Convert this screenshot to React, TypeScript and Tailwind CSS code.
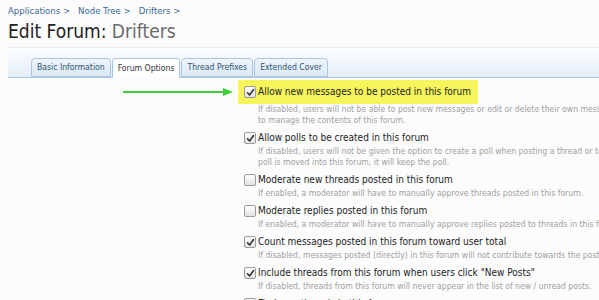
import { ReactNode } from 'react';

const font = { fontFamily: '"DejaVu Sans Condensed", "DejaVu Sans", Tahoma, sans-serif' };

type Option = {
    label: string;
    hint: string[];
    checked: boolean;
    highlight?: boolean;
};

const options: Option[] = [
    {
        label: 'Allow new messages to be posted in this forum',
        hint: [
            'If disabled, users will not be able to post new messages or edit or delete their own messages. Moderators will still be able',
            'to manage the contents of this forum.',
        ],
        checked: true,
        highlight: true,
    },
    {
        label: 'Allow polls to be created in this forum',
        hint: [
            'If disabled, users will not be given the option to create a poll when posting a thread or to add one later. If a thread with a',
            'poll is moved into this forum, it will keep the poll.',
        ],
        checked: true,
    },
    {
        label: 'Moderate new threads posted in this forum',
        hint: ['If enabled, a moderator will have to manually approve threads posted in this forum.'],
        checked: false,
    },
    {
        label: 'Moderate replies posted in this forum',
        hint: ['If enabled, a moderator will have to manually approve replies posted to threads in this forum.'],
        checked: false,
    },
    {
        label: 'Count messages posted in this forum toward user total',
        hint: ['If disabled, messages posted (directly) in this forum will not contribute towards the posting count of the user.'],
        checked: true,
    },
    {
        label: 'Include threads from this forum when users click "New Posts"',
        hint: ['If disabled, threads from this forum will never appear in the list of new / unread posts.'],
        checked: true,
    },
    {
        label: 'Find new threads in this forum',
        hint: ['If enabled, threads in this forum will be listed.'],
        checked: false,
    },
];

function Checkbox({ checked }: { checked: boolean }) {
    return (
        <span className="w-[12px] h-[12px] shrink-0 rounded-[2px] border border-[#9a9a9a] bg-gradient-to-b from-white to-[#e2e2e2] flex items-center justify-center">
            {checked && (
                <svg width="9" height="9" viewBox="0 0 9 9">
                    <path d="M1.5 4.8 L3.6 7 L7.6 1.6" fill="none" stroke="#333" strokeWidth="1.6" strokeLinecap="round" strokeLinejoin="round" />
                </svg>
            )}
        </span>
    );
}

function Tab({ children, active }: { children: ReactNode; active?: boolean }) {
    return (
        <div
            className={
                active
                    ? 'h-[20px] px-[5px] flex items-center text-[8.6px] text-[#333] bg-white border border-b-0 border-[#a9c6e2] rounded-t-[4px] -mb-px relative z-10'
                    : 'h-[19px] px-[5px] flex items-center text-[8.6px] text-[#2f5373] bg-gradient-to-b from-[#eef5fb] to-[#dce9f5] border border-[#a9c6e2] rounded-t-[4px]'
            }
        >
            {children}
        </div>
    );
}

export default function App() {
    return (
        <div className="w-[599px] h-[300px] overflow-hidden bg-[#fcfcfd]" style={font}>
            {/* Breadcrumb */}
            <div className="pl-[8px] pt-[5px] h-[17px] flex items-center gap-[8px] text-[9.5px] text-[#3b6a93]">
                <span>Applications &gt;</span>
                <span>Node Tree &gt;</span>
                <span>Drifters &gt;</span>
            </div>

            {/* Title */}
            <h1 className="pl-[8px] h-[28px] flex items-center text-[19px] leading-none text-[#222]">
                Edit Forum:&nbsp;<span className="text-[#6b6b6b]">Drifters</span>
            </h1>

            {/* Tabs header */}
            <div className="ml-[8px] mt-[2px] h-[31px] border-t border-[#e3edf6] bg-gradient-to-b from-[#fcfdfe] to-[#e4eef8] border-b border-b-[#a9c6e2] flex items-end pl-[23px] gap-px">
                <Tab>Basic Information</Tab>
                <Tab active>Forum Options</Tab>
                <Tab>Thread Prefixes</Tab>
                <Tab>Extended Cover</Tab>
            </div>

            {/* Options */}
            <div className="relative pl-[238px] pt-[2px]">
                {/* annotation arrow */}
                <svg className="absolute left-[121px] top-[9px]" width="114" height="10" viewBox="0 0 114 10">
                    <line x1="2" y1="5" x2="104" y2="5" stroke="#3dcf3d" strokeWidth="2" />
                    <path d="M102 1 L112 5 L102 9 Z" fill="#3dcf3d" />
                </svg>

                <div className="flex flex-col gap-[5px]">
                    {options.map((o) => (
                        <div key={o.label} className="flex flex-col">
                            <div
                                className={
                                    o.highlight
                                        ? 'self-start h-[24px] pl-[6px] pr-[7px] flex items-center gap-[2px] bg-[#f6f55c]'
                                        : 'h-[14px] pl-[6px] flex items-center gap-[2px]'
                                }
                            >
                                <Checkbox checked={o.checked} />
                                <span className="text-[10px] leading-[14px] text-[#222] whitespace-nowrap">{o.label}</span>
                            </div>
                            <div className={o.highlight ? 'pl-[20px] mt-0' : 'pl-[20px] mt-[1px]'}>
                                {o.hint.map((h) => (
                                    <div key={h} className="text-[8.6px] leading-[11px] text-[#a0a0a0] whitespace-nowrap">
                                        {h}
                                    </div>
                                ))}
                            </div>
                        </div>
                    ))}
                </div>
            </div>
        </div>
    );
}
